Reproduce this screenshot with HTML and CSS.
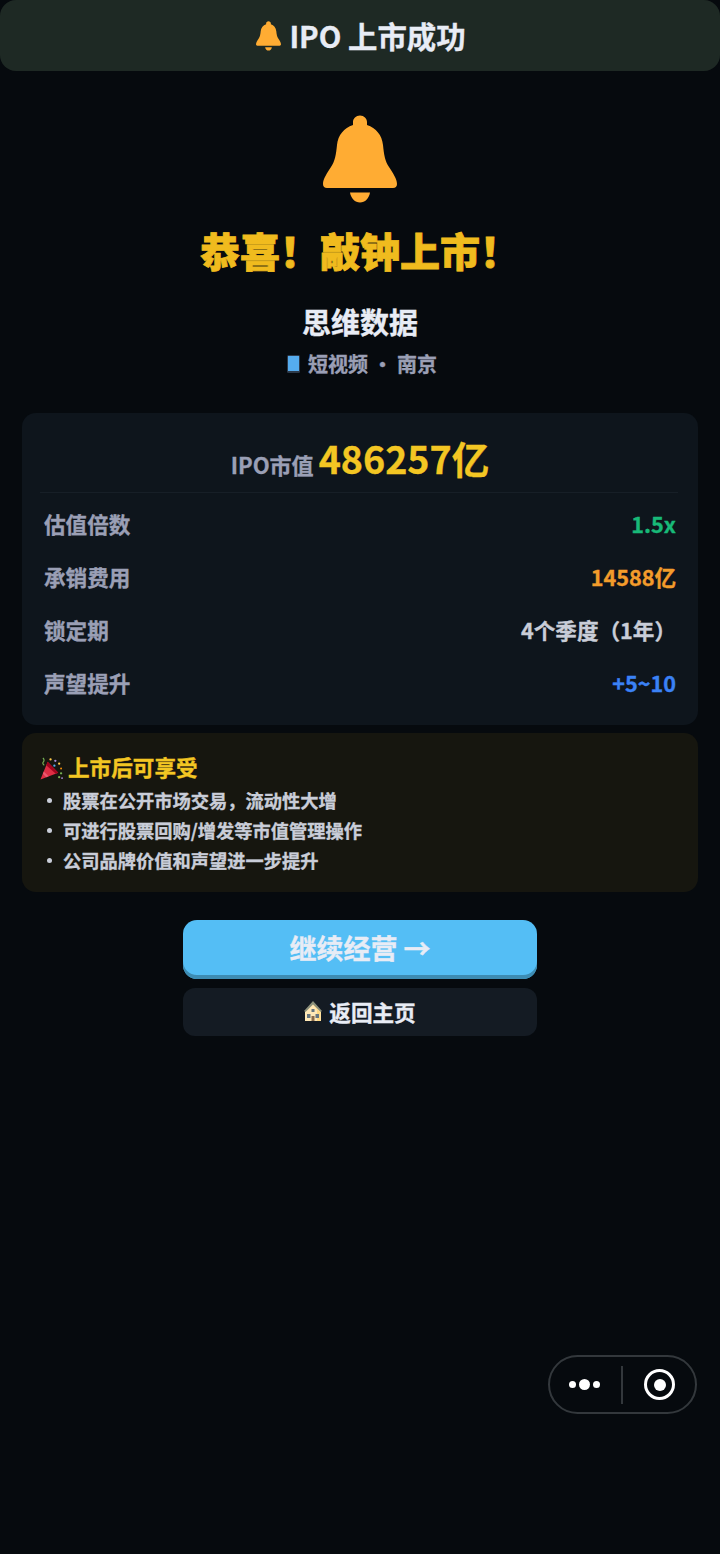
FILE: index.html
```html
<!DOCTYPE html>
<html lang="zh-CN">
<head>
    <meta charset="UTF-8">
    <meta name="viewport" content="width=device-width, initial-scale=1.0">
    <title>IPO 上市成功</title>
    <link rel="stylesheet" href="styles.css">
</head>
<body>
    <header class="topbar">
        <svg class="bell-small" viewBox="0 0 74 88"><path d="M37 .5C41 .5 44 3.500 44 7V10C53 13 59 20 60 30C61 40 62 46 66 52C70 58 74 64 74 69C74 71.500 72.500 73 70 73H4C1.500 73 0 71.500 0 69C0 64 4 58 8 52C12 46 13 40 14 30C15 20 21 13 30 10V7C30 3.500 33 .5 37 .5Z"/><path d="M27 77.500h20c-1 6-5 10-10 10s-9-4-10-10Z"/></svg>
        <span>IPO 上市成功</span>
    </header>

    <section class="hero">
        <svg class="bell-big" viewBox="0 0 74 88"><path d="M37 .5C41 .5 44 3.500 44 7V10C53 13 59 20 60 30C61 40 62 46 66 52C70 58 74 64 74 69C74 71.500 72.500 73 70 73H4C1.500 73 0 71.500 0 69C0 64 4 58 8 52C12 46 13 40 14 30C15 20 21 13 30 10V7C30 3.500 33 .5 37 .5Z"/><path d="M27 77.500h20c-1 6-5 10-10 10s-9-4-10-10Z"/></svg>
        <h1 class="hero-title">恭喜！敲钟上市！</h1>
        <div class="company">思维数据</div>
        <div class="company-sub">
            <svg class="icon-phone" viewBox="0 0 13 18"><rect width="13" height="18" rx="1.500" fill="#2d3a4a"/><rect x="1" y="1" width="11" height="15" fill="#55acee"/></svg>
            <span>短视频 · 南京</span>
        </div>
    </section>

    <section class="card">
        <div class="card-head">
            <span class="head-label">IPO市值</span>
            <span class="head-value">486257亿</span>
        </div>
        <div class="row"><span class="row-label">估值倍数</span><span class="val-green">1.5x</span></div>
        <div class="row"><span class="row-label">承销费用</span><span class="val-orange">14588亿</span></div>
        <div class="row"><span class="row-label">锁定期</span><span class="val-plain">4个季度（1年）</span></div>
        <div class="row"><span class="row-label">声望提升</span><span class="val-blue">+5~10</span></div>
    </section>

    <section class="perks">
        <div class="perks-title">
            <svg class="icon-party" viewBox="0 0 24 24">
                <path d="M0.500 23.500L8 5L19 16.500Z" fill="#dd2e44"/>
                <path d="M8 5L19 16.500L16.500 17.500L6.500 8.500Z" fill="#a0041e"/>
                <path d="M4 15L9 20L6.500 21L3 17.500Z" fill="#ea596e"/>
                <circle cx="11" cy="2.500" r="1.200" fill="#ffcc4d"/><circle cx="16" cy="4" r="1.200" fill="#aa8dd8"/>
                <circle cx="20" cy="7" r="1.200" fill="#ffcc4d"/><circle cx="15" cy="9" r="1.200" fill="#55acee"/>
                <circle cx="22" cy="12" r="1" fill="#f4900c"/><circle cx="22" cy="17" r="1.200" fill="#77b255"/>
                <circle cx="20" cy="21" r="1.200" fill="#77b255"/><circle cx="23" cy="22" r="1" fill="#aa8dd8"/>
                <path d="M3 1c1.500 1 1.500 3 .5 4s-.5 3 1 3.500" fill="none" stroke="#77b255" stroke-width="1.200"/>
            </svg>
            <span>上市后可享受</span>
        </div>
        <ul class="perk-list">
            <li>股票在公开市场交易，流动性大增</li>
            <li>可进行股票回购/增发等市值管理操作</li>
            <li>公司品牌价值和声望进一步提升</li>
        </ul>
    </section>

    <div class="actions">
        <button class="btn-primary">继续经营 →</button>
        <button class="btn-secondary">
            <svg class="icon-house" viewBox="0 0 18 20">
                <path d="M1 10L9 1L17 10V20H1Z" fill="#ffe8b6"/>
                <path d="M0 10L9 0L18 10L16.500 11L9 3.500L1.500 11Z" fill="#8a8f7a"/>
                <path d="M9 3.500L16.500 11V20H13V9Z" fill="#ffd983"/>
                <rect x="3" y="13" width="3.500" height="4" fill="#66757f"/>
                <rect x="11.500" y="13" width="3.500" height="4" fill="#66757f"/>
                <rect x="7.500" y="15" width="3" height="5" fill="#8a6a4a"/>
                <rect x="7.500" y="8" width="3" height="3" fill="#66757f"/>
            </svg>
            <span>返回主页</span>
        </button>
    </div>

    <div class="capsule">
        <div class="capsule-dots"><i class="dot"></i><i class="dot dot-big"></i><i class="dot"></i></div>
        <div class="capsule-line"></div>
        <div class="capsule-target"><i class="target-core"></i></div>
    </div>
</body>
</html>
```
FILE: styles.css
```css
* {
    box-sizing: border-box;
}
body {
    margin: 0;
    min-height: 1554px;
    padding: 0 22px;
    background-color: #060a0e;
    color: #e8ecf5;
    font-family: "Noto Sans CJK SC", "Noto Sans", sans-serif;
    font-weight: 700;
    -webkit-text-stroke: 0.35px;
}
.topbar {
    display: flex;
    align-items: center;
    justify-content: center;
    gap: 8px;
    height: 71px;
    margin: 0 -22px;
    padding: 0 0 2px 2px;
    background: #1e2924;
    border-radius: 16px;
    font-size: 29.4px;
}
.bell-small {
    width: 25px;
    height: 29.700px;
    margin-top: 3px;
    fill: #ffac33;
}
.hero {
    display: flex;
    flex-direction: column;
    align-items: center;
    padding-top: 44px;
}
.bell-big {
    width: 74px;
    height: 88px;
    fill: #ffac33;
}
.hero-title {
    margin: 19px 0 0;
    height: 56px;
    line-height: 56px;
    font-size: 40px;
    font-weight: 900;
    color: #f0bb1e;
    -webkit-text-stroke: 0.8px;
}
.company {
    margin-top: 22px;
    height: 42px;
    line-height: 42px;
    font-size: 29px;
    color: #e8ecf5;
}
.company-sub {
    display: flex;
    align-items: center;
    justify-content: center;
    gap: 8px;
    height: 30px;
    margin-top: 6px;
    padding-left: 4px;
    font-size: 20px;
    color: #9a9fb5;
}
.icon-phone {
    width: 13px;
    height: 18px;
    margin-top: 1px;
}
.card {
    margin-top: 35px;
    padding: 14px 18px 16px;
    background: #0e151c;
    border-radius: 14px;
}
.card-head {
    display: flex;
    align-items: baseline;
    justify-content: center;
    gap: 5px;
    height: 66px;
    margin-right: 2px;
    padding-left: 2px;
    border-bottom: 1px solid #171f27;
    line-height: 62px;
}
.head-label {
    font-size: 22px;
    color: #9a9fb5;
}
.head-value {
    font-size: 37.6px;
    color: #f3c623;
}
.card-head + .row {
    margin-top: 4px;
}
.row {
    display: flex;
    align-items: center;
    justify-content: space-between;
    height: 53px;
    padding: 0 4px;
    font-size: 21.6px;
    color: #c9cdd8;
}
.row-label {
    color: #9a9fb5;
}
.val-green {
    color: #18b978;
}
.val-orange {
    color: #f39c2b;
}
.val-plain {
    color: #c9cdd8;
}
.val-blue {
    color: #3b82f6;
}
.perks {
    margin-top: 8px;
    padding: 17px 18px;
    background: #16160f;
    border-radius: 14px;
}
.perks-title {
    display: flex;
    align-items: center;
    gap: 5px;
    height: 34px;
    margin-bottom: 1px;
    padding-bottom: 2px;
    font-size: 21.6px;
    color: #f3c623;
}
.icon-party {
    width: 23px;
    height: 23px;
    margin-top: 4px;
}
.perk-list {
    margin: 0;
    padding: 0;
    list-style: none;
    font-size: 18.25px;
    color: #c9cdd8;
}
.perk-list li {
    display: flex;
    align-items: center;
    height: 30px;
    padding-left: 23px;
    position: relative;
}
.perk-list li::before {
    content: "";
    position: absolute;
    left: 7px;
    top: 13px;
    width: 5px;
    height: 5px;
    border-radius: 50%;
    background: #c9cdd8;
}
.actions {
    display: flex;
    flex-direction: column;
    align-items: center;
    gap: 9px;
    margin-top: 28px;
}
.actions button {
    width: 354px;
    border: none;
    font-family: inherit;
    font-weight: 700;
    color: #e8ecf5;
    -webkit-text-stroke: 0.35px;
}
.btn-primary {
    height: 59px;
    padding-bottom: 6px;
    background: #54bef5;
    border-radius: 14px;
    box-shadow: inset 0 -4px 0 #3d8cb3;
    font-size: 27px;
}
.btn-secondary {
    display: flex;
    align-items: center;
    justify-content: center;
    gap: 7px;
    height: 48px;
    padding-bottom: 3px;
    background: #141b23;
    border-radius: 12px;
    font-size: 21.6px;
}
.icon-house {
    width: 18px;
    height: 20px;
}
.capsule {
    position: fixed;
    left: 548px;
    top: 1355px;
    display: flex;
    align-items: center;
    width: 149px;
    height: 59px;
    border: 2px solid #33383c;
    border-radius: 30px;
}
.capsule-dots {
    display: flex;
    align-items: center;
    justify-content: center;
    gap: 3px;
    width: 71px;
    padding-right: 2px;
}
.dot {
    width: 7px;
    height: 7px;
    border-radius: 50%;
    background: #fff;
}
.dot-big {
    width: 11px;
    height: 11px;
}
.capsule-line {
    width: 2px;
    height: 38px;
    background: #33383c;
}
.capsule-target {
    display: flex;
    align-items: center;
    justify-content: center;
    width: 31px;
    height: 31px;
    margin-left: 21px;
    border: 3px solid #fff;
    border-radius: 50%;
}
.target-core {
    width: 12px;
    height: 12px;
    border-radius: 50%;
    background: #fff;
}
```
